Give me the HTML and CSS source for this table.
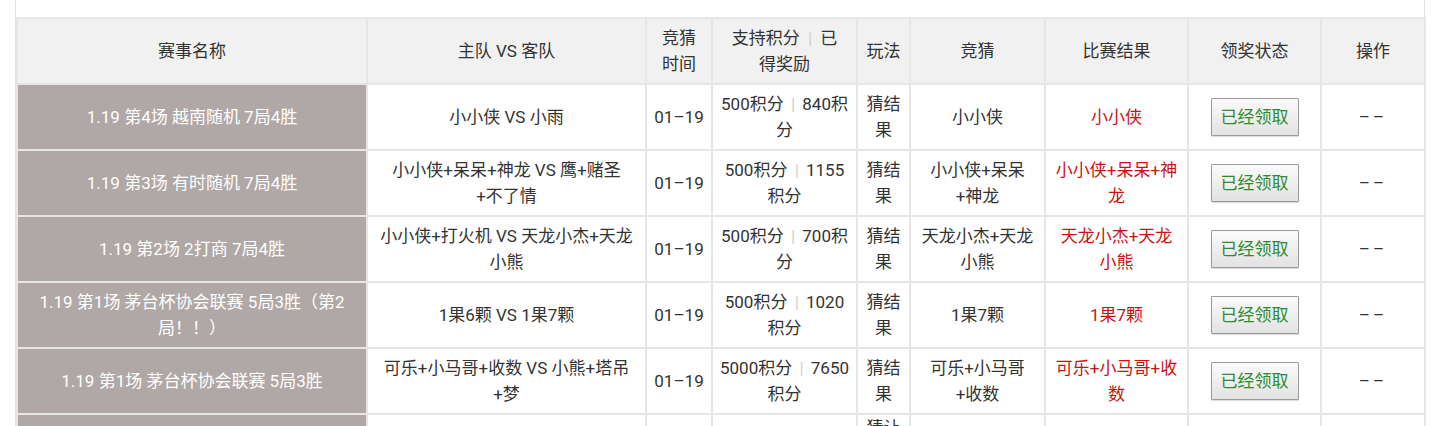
FILE: index.html
```html
<!DOCTYPE html>
<html lang="zh-CN">
<head>
<meta charset="utf-8">
<title>竞猜记录</title>
<link rel="stylesheet" href="styles.css">
</head>
<body>
<div class="panel">
  <table class="records">
    <colgroup>
      <col class="c-name"><col class="c-teams"><col class="c-time"><col class="c-points"><col class="c-play"><col class="c-guess"><col class="c-result"><col class="c-status"><col class="c-op">
    </colgroup>
    <thead>
      <tr>
        <th>赛事名称</th>
        <th>主队 VS 客队</th>
        <th class="narrow">竞猜时间</th>
        <th class="narrow">支持积分 <span class="sep">|</span> 已得奖励</th>
        <th>玩法</th>
        <th>竞猜</th>
        <th>比赛结果</th>
        <th>领奖状态</th>
        <th>操作</th>
      </tr>
    </thead>
    <tbody>
      <tr>
        <td class="name">1.19 第4场 越南随机 7局4胜</td>
        <td class="teams">小小侠 VS 小雨</td>
        <td>01–19</td>
        <td>500积分 <span class="sep">|</span> 840积分</td>
        <td>猜结果</td>
        <td class="pick">小小侠</td>
        <td class="pick win">小小侠</td>
        <td><button class="claimed" type="button">已经领取</button></td>
        <td class="none">––</td>
      </tr>
      <tr>
        <td class="name">1.19 第3场 有时随机 7局4胜</td>
        <td class="teams">小小侠+呆呆+神龙 VS 鹰+赌圣+不了情</td>
        <td>01–19</td>
        <td>500积分 <span class="sep">|</span> 1155积分</td>
        <td>猜结果</td>
        <td class="pick">小小侠+呆呆+神龙</td>
        <td class="pick win">小小侠+呆呆+神龙</td>
        <td><button class="claimed" type="button">已经领取</button></td>
        <td class="none">––</td>
      </tr>
      <tr>
        <td class="name">1.19 第2场 2打商 7局4胜</td>
        <td class="teams">小小侠+打火机 VS 天龙小杰+天龙小熊</td>
        <td>01–19</td>
        <td>500积分 <span class="sep">|</span> 700积分</td>
        <td>猜结果</td>
        <td class="pick">天龙小杰+天龙小熊</td>
        <td class="pick win">天龙小杰+天龙小熊</td>
        <td><button class="claimed" type="button">已经领取</button></td>
        <td class="none">––</td>
      </tr>
      <tr>
        <td class="name">1.19 第1场 茅台杯协会联赛 5局3胜（第2局！！）</td>
        <td class="teams">1果6颗 VS 1果7颗</td>
        <td>01–19</td>
        <td>500积分 <span class="sep">|</span> 1020积分</td>
        <td>猜结果</td>
        <td class="pick">1果7颗</td>
        <td class="pick win">1果7颗</td>
        <td><button class="claimed" type="button">已经领取</button></td>
        <td class="none">––</td>
      </tr>
      <tr>
        <td class="name">1.19 第1场 茅台杯协会联赛 5局3胜</td>
        <td class="teams">可乐+小马哥+收数 VS 小熊+塔吊+梦</td>
        <td>01–19</td>
        <td>5000积分 <span class="sep">|</span> 7650积分</td>
        <td>猜结果</td>
        <td class="pick">可乐+小马哥+收数</td>
        <td class="pick win">可乐+小马哥+收数</td>
        <td><button class="claimed" type="button">已经领取</button></td>
        <td class="none">––</td>
      </tr>
      <tr>
        <td class="name">1.18 第6场 越南随机 7局4胜</td>
        <td class="teams">小小侠 VS 鹰</td>
        <td>01–18</td>
        <td>500积分</td>
        <td>猜让局胜负</td>
        <td class="pick">小小侠</td>
        <td class="pick win">小小侠</td>
        <td><button class="claimed" type="button">已经领取</button></td>
        <td class="none">––</td>
      </tr>
    </tbody>
  </table>
</div>
</body>
</html>
```
FILE: styles.css
```css
html, body {
  margin: 0;
  padding: 0;
  background: #ffffff;
}

body {
  font-family: Roboto, "Noto Sans CJK SC", sans-serif;
  font-size: 17px;
  line-height: 26px;
  color: #333333;
}

.panel {
  margin-left: 15px;
  width: 1408px;
  padding-top: 17px;
  border-left: 1px solid #e3e3e3;
  border-right: 1px solid #e3e3e3;
  background: #ffffff;
}

.records {
  width: 1408px;
  table-layout: fixed;
  border-collapse: collapse;
}

.c-name { width: 350px; }
.c-teams { width: 279px; }
.c-time { width: 66px; }
.c-points { width: 145px; }
.c-play { width: 53px; }
.c-guess { width: 135px; }
.c-result { width: 143px; }
.c-status { width: 133px; }
.c-op { width: 104px; }

.records th,
.records td {
  border: 2px solid #e6e6e6;
  padding: 0 6px;
  height: 64px;
  text-align: center;
  vertical-align: middle;
  font-weight: normal;
}

.records thead th {
  background: #f1f1f1;
  color: #333333;
}

.records th.narrow {
  padding: 0 12px;
}

.records td.teams {
  padding: 0 12px;
}

.records td.pick {
  padding: 0 8px;
}

.records td.name {
  background: #b0a8a6;
  color: #ffffff;
}

.records td.win {
  color: #cc1111;
}

.records td.none {
  letter-spacing: 3px;
}

.sep {
  color: #d0d0d0;
  margin: 0 3px;
}

.records th .sep {
  margin: 0 4px;
}

.claimed {
  font-family: inherit;
  font-size: 17px;
  line-height: 26px;
  color: #2e8b2e;
  padding: 5px 9px;
  border: 1px solid #9a9a9a;
  border-radius: 1px;
  background: linear-gradient(#fbfbfb, #e2e2e2);
  box-shadow: 0 1px 1px rgba(0, 0, 0, 0.15);
  cursor: pointer;
}
```
